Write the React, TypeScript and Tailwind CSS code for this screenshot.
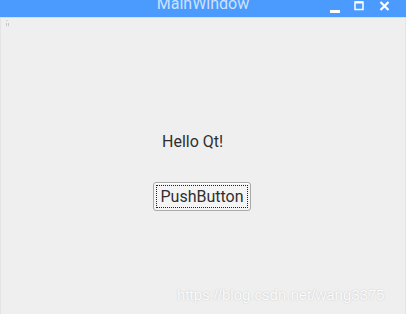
export default function App() {
  return (
    <div
      className="relative flex h-[314px] w-[406px] flex-col overflow-hidden bg-[#efefef]"
      style={{ fontFamily: 'Roboto, "Liberation Sans", sans-serif' }}
    >
      {/* title bar */}
      <div className="flex h-[17px] shrink-0 items-start bg-[#4a9bfd] pl-[76px] pr-[16px]">
        <span className="mt-[-5px] flex-1 text-center text-[16px] leading-[18px] text-[#cfe2ff]">
          MainWindow
        </span>
        <div className="mt-[1px] flex items-start gap-[14px]">
          <svg width="10" height="12" viewBox="0 0 10 12">
            <rect x="0" y="9" width="10" height="3" fill="#fff" />
          </svg>
          <svg width="11" height="10" viewBox="0 0 11 10">
            <rect x="1" y="1" width="8" height="7.5" fill="none" stroke="#fff" strokeWidth="1.5" />
            <rect x="1" y="0.5" width="8" height="2" fill="#fff" />
          </svg>
          <svg width="11" height="10" viewBox="0 0 11 10">
            <path d="M1.5 1 L9.5 9 M9.5 1 L1.5 9" stroke="#fff" strokeWidth="2.2" />
          </svg>
        </div>
      </div>
      <div className="h-px shrink-0 bg-[#dcdcdc]" />

      {/* body */}
      <div className="relative flex flex-1 flex-col border-x border-[#e4e4e4] pl-[152px] pt-[2px]">
        {/* toolbar grip */}
        <div className="-ml-[147px] flex w-[3px] flex-col gap-[2px]">
          <div className="h-px w-[2px] bg-[#d6d6d6]" />
          <div className="flex gap-px">
            <div className="h-[3px] w-px bg-[#c4c4c4]" />
            <div className="h-[3px] w-px bg-[#c4c4c4]" />
          </div>
        </div>

        <div className="ml-[9px] mt-[106px] text-[16px] leading-[20px] text-[#2f2f2f]">
          Hello Qt!
        </div>

        <div className="mt-[30px] flex h-[29px] w-[98px] items-center justify-center rounded-[3px] border border-[#a9a9a9] bg-[#f4f4f4] p-[2px] shadow-[inset_0_1px_0_#ffffff]">
          <div className="flex h-full w-full items-center justify-center border border-dotted border-[#222] text-[16px] leading-[18px] text-[#2f2f2f]">
            PushButton
          </div>
        </div>

        {/* watermark overlay */}
        <div
          className="absolute left-[176px] top-[268px] text-[15px] leading-[18px] text-[#fbfbfb] [text-shadow:0_0_1.5px_#bdbdbd]"
          style={{ fontFamily: '"Liberation Sans", Arial, sans-serif' }}
        >
          https://blog.csdn.net/wang3375
        </div>
      </div>
    </div>
  );
}
